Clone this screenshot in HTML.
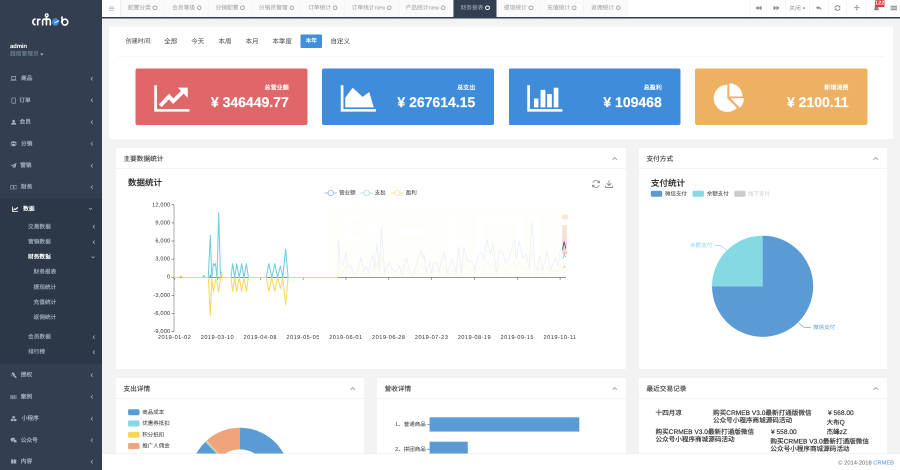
<!DOCTYPE html>
<html lang="zh-CN">
<head>
<meta charset="utf-8">
<title>CRMEB</title>
<style>
html,body{margin:0;padding:0;width:900px;height:470px;overflow:hidden;background:#f3f3f4}
body{font-family:"Liberation Sans",sans-serif}
#app{text-rendering:geometricPrecision;position:absolute;left:0;top:0;width:1800px;height:940px;transform:scale(.5);transform-origin:0 0;will-change:transform;font-size:12px;color:#676a6c;overflow:hidden;line-height:1}
#app *{box-sizing:border-box}
.a{position:absolute;white-space:nowrap}
#side{left:0;top:0;width:204px;height:940px;background:#333e50}
#sub{left:0;top:397px;width:204px;height:330px;background:#2c3747}
.nv{left:42px;font-size:11.4px;font-weight:bold;color:#a7b1c2;height:14px;line-height:14px}
.nv2{left:56px;font-size:11.4px;color:#b2bbc9;-webkit-text-stroke:.2px #b2bbc9;height:14px;line-height:14px}
.nv3{left:67px;font-size:11.4px;color:#b2bbc9;-webkit-text-stroke:.2px #b2bbc9;height:14px;line-height:14px}
.ch{font-size:13px;color:#a7b1c2;height:14px;line-height:14px;font-weight:bold}
.ic{left:20.5px;width:12.600px;height:12.600px}
#top{left:204px;top:0;width:1596px;height:34.5px;background:#fff}
#topb{left:204px;top:34.2px;width:1596px;height:2.900px;background:#333e50}
.tab{top:0;height:34px;line-height:33.5px;font-size:11.5px;color:#9c9c9c;background:#fafafa;border-right:1px solid #eee;padding-left:14.3px}
.tab i{display:inline-block;width:9.5px;height:9.5px;border:2.3px solid #adadad;border-radius:50%;margin-left:3.5px;vertical-align:-1px}
.tab.on{background:#333e50;color:#a7b1c2;border-right:none}
.tab.on i{border:2.5px solid #fff;background:#333e50}
.rb{top:0;height:34px;background:#fff;border-left:1px solid #eee;line-height:34px;text-align:center;color:#999;font-size:11.5px}
.box{background:#fff}
.hd{height:45px;border-bottom:1px solid #e7eaec;border-top:2px solid #e7eaec}
.hd span{position:absolute;left:15px;top:17.3px;font-size:13.3px;color:#444;line-height:14px;-webkit-text-stroke:.3px #444}
.card{top:137px;width:344.5px;height:113px;border-radius:4px}
.card .l{position:absolute;right:37.5px;top:31px;font-size:12.1px;font-weight:bold;color:#fff;line-height:14px}
.card .n{position:absolute;right:37.5px;top:52.5px;font-size:28px;font-weight:bold;color:#fff;line-height:30px;-webkit-text-stroke:.4px #fff}
.flt{top:75px;font-size:13px;color:#444;height:16px;line-height:16px}
.ax{font-size:11.3px;color:#333;height:12px;line-height:12px;letter-spacing:.9px}
.lg{font-size:11px;color:#333;height:12px;line-height:12px}
.tx{font-size:13.2px;color:#333;line-height:15px;-webkit-text-stroke:.35px #333}
</style>
</head>
<body>
<div id="app">
<div id="side" class="a">
<div id="sub" class="a"></div>
<svg class="a" style="left:60px;top:20px" width="84" height="40" viewBox="30 10 42 20">
<g fill="none" stroke="#fff" stroke-width="1.65" stroke-linecap="round" stroke-linejoin="round">
<path d="M35,19.100A2.900,2.900 0 0 0 35,24.700"/>
<path d="M37.700,24.800V19.300M37.700,21.700A2.400,2.400 0 0 1 40,19.300"/>
<path d="M42.600,24.800V20.900A1.930,1.930 0 0 1 46.450,20.900V24.800M46.450,20.900A1.930,1.930 0 0 1 50.300,20.900V24.800M46.450,20.900V17.200"/>
<path d="M62,17.100V22.100"/><circle cx="64.900" cy="22.100" r="2.900"/>
</g>
<circle cx="46.700" cy="15.200" r="1.350" fill="#333e50" stroke="#fff" stroke-width="1.300"/>
<ellipse cx="55.450" cy="21.900" rx="3.400" ry="3.800" fill="#3b8de0"/>
<path d="M54.500,22.800L59.200,20.700" stroke="#fff" stroke-width="1"/>
</svg>
<div class="a" style="left:20px;top:85px;font-size:12px;letter-spacing:-.3px;font-weight:bold;color:#fff;line-height:14px">admin</div>
<div class="a" style="left:20px;top:101px;font-size:11.5px;color:#8095a8;line-height:14px">超级管理员 <svg width="7.500" height="4.200" viewBox="0 0 8 4.500" style="vertical-align:-.3px;margin-left:-.5px"><path d="M0,0h8l-4,4.500z" fill="#a3aebf"/></svg></div>
<svg class="a ic" style="top:151.1px" viewBox="0 0 14 14"><path d="M2.5,2.5h9v6.5h-9z" fill="none" stroke="#a7b1c2" stroke-width="1.4"/><path d="M0,10.5h14v1.2h-14z" fill="#a7b1c2"/></svg>
<div class="a nv" style="top:150.4px;left:42.0px;color:#a7b1c2">商品</div>
<svg class="a" style="left:181px;top:152.9px" width="6" height="9" viewBox="0 0 6 9"><path d="M4.500,1l-3.500,3.500 3.500,3.500" fill="none" stroke="#a7b1c2" stroke-width="1.500"/></svg>
<svg class="a ic" style="top:194.5px" viewBox="0 0 14 14"><rect x="3" y="1" width="8.5" height="12" rx="1.5" fill="none" stroke="#a7b1c2" stroke-width="1.4"/><circle cx="7.2" cy="10.8" r=".8" fill="#a7b1c2"/></svg>
<div class="a nv" style="top:193.8px;left:38.5px;color:#a7b1c2">订单</div>
<svg class="a" style="left:181px;top:196.3px" width="6" height="9" viewBox="0 0 6 9"><path d="M4.500,1l-3.500,3.500 3.500,3.500" fill="none" stroke="#a7b1c2" stroke-width="1.500"/></svg>
<svg class="a ic" style="top:237.9px" viewBox="0 0 14 14"><circle cx="7" cy="4.5" r="2.8" fill="#a7b1c2"/><path d="M1.5,12.5c0-4,2.5-5,5.5-5s5.5,1,5.500,5z" fill="#a7b1c2"/></svg>
<div class="a nv" style="top:237.2px;left:39.0px;color:#a7b1c2">会员</div>
<svg class="a" style="left:181px;top:239.7px" width="6" height="9" viewBox="0 0 6 9"><path d="M4.500,1l-3.500,3.500 3.500,3.500" fill="none" stroke="#a7b1c2" stroke-width="1.500"/></svg>
<svg class="a ic" style="top:281.3px" viewBox="0 0 14 14"><circle cx="7" cy="3.6" r="2.4" fill="#a7b1c2"/><circle cx="2.6" cy="4.4" r="1.8" fill="#a7b1c2"/><circle cx="11.4" cy="4.4" r="1.8" fill="#a7b1c2"/><path d="M2.5,12.5c0-4,2-5.2,4.500-5.200s4.500,1.200,4.500,5.200z M0,9.500c0-2.500,1-3.200,2.800-3.200l-.8,3.200z M14,9.500c0-2.500-1-3.200-2.800-3.200l.8,3.200z" fill="#a7b1c2"/></svg>
<div class="a nv" style="top:280.6px;left:42.0px;color:#a7b1c2">分销</div>
<svg class="a" style="left:181px;top:283.1px" width="6" height="9" viewBox="0 0 6 9"><path d="M4.500,1l-3.500,3.500 3.500,3.500" fill="none" stroke="#a7b1c2" stroke-width="1.500"/></svg>
<svg class="a ic" style="top:324.7px" viewBox="0 0 14 14"><path d="M13.500,.8L.8,7.200l3.600,1.500 7-5.500-5.500,6.500v3.300l2.200-2.400 2.800,1.200z" fill="#a7b1c2"/></svg>
<div class="a nv" style="top:324.0px;left:40.2px;color:#a7b1c2">营销</div>
<svg class="a" style="left:181px;top:326.5px" width="6" height="9" viewBox="0 0 6 9"><path d="M4.500,1l-3.500,3.500 3.500,3.500" fill="none" stroke="#a7b1c2" stroke-width="1.500"/></svg>
<svg class="a ic" style="top:368.1px" viewBox="0 0 14 14"><rect x=".7" y="3" width="12.600" height="8" fill="none" stroke="#a7b1c2" stroke-width="1.3"/><ellipse cx="7" cy="7" rx="1.600" ry="2.300" fill="#a7b1c2"/></svg>
<div class="a nv" style="top:367.4px;left:42.0px;color:#a7b1c2">财务</div>
<svg class="a" style="left:181px;top:369.9px" width="6" height="9" viewBox="0 0 6 9"><path d="M4.500,1l-3.500,3.500 3.500,3.500" fill="none" stroke="#a7b1c2" stroke-width="1.500"/></svg>
<svg class="a ic" style="top:411.5px;left:24.2px" viewBox="0 0 14 14"><path d="M1,1.500v10.500h12.500" fill="none" stroke="#fff" stroke-width="1.800"/><path d="M3,9.500l3-3.500 2.200,2 4-4.500" fill="none" stroke="#fff" stroke-width="2.100"/><path d="M9.800,2.800h3.400v3.400z" fill="#fff"/></svg>
<div class="a nv" style="top:410.8px;left:46.3px;color:#fff">数据</div>
<svg class="a" style="left:177px;top:415.3px" width="8" height="5.300" viewBox="0 0 9 6"><path d="M1,1l3.500,3.500 3.500-3.500" fill="none" stroke="#a7b1c2" stroke-width="1.600"/></svg>
<svg class="a ic" style="top:744.1px" viewBox="0 0 14 14"><path d="M5.200,1l4.500,4.500-2.200,2.200-4.500-4.500z M7.500,6l5.800,5.800-1.500,1.500-5.800-5.800z M1,6.500l3.500,3.500" fill="#a7b1c2" stroke="#a7b1c2" stroke-width="1.200"/></svg>
<div class="a nv" style="top:743.4px;left:41.5px;color:#a7b1c2">授权</div>
<svg class="a" style="left:181px;top:745.9px" width="6" height="9" viewBox="0 0 6 9"><path d="M4.500,1l-3.500,3.500 3.500,3.500" fill="none" stroke="#a7b1c2" stroke-width="1.500"/></svg>
<svg class="a ic" style="top:787.5px" viewBox="0 0 14 14"><path d="M0,2.500h1.500v9h-1.500z M2.500,2.500h.8v9h-.8z M4.200,2.500h1.600v9h-1.600z M6.800,2.500h.8v9h-.8z M8.500,2.500h1.600v9h-1.600z M11,2.500h.8v9h-.8z M12.600,2.500h1.400v9h-1.400z" fill="#a7b1c2"/></svg>
<div class="a nv" style="top:786.8px;left:41.5px;color:#a7b1c2">案例</div>
<svg class="a" style="left:181px;top:789.3px" width="6" height="9" viewBox="0 0 6 9"><path d="M4.500,1l-3.500,3.500 3.500,3.500" fill="none" stroke="#a7b1c2" stroke-width="1.500"/></svg>
<svg class="a ic" style="top:830.9px" viewBox="0 0 14 14"><path d="M7,1l3,1.300v3.200l-3,1.300-3-1.300v-3.200z M3.600,7l3,1.300v3.400l-3,1.300-3-1.300v-3.400z M10.400,7l3,1.300v3.400l-3,1.300-3-1.300v-3.400z" fill="#a7b1c2"/></svg>
<div class="a nv" style="top:830.2px;left:43.4px;color:#a7b1c2">小程序</div>
<svg class="a" style="left:181px;top:832.7px" width="6" height="9" viewBox="0 0 6 9"><path d="M4.500,1l-3.500,3.500 3.500,3.500" fill="none" stroke="#a7b1c2" stroke-width="1.500"/></svg>
<svg class="a ic" style="top:874.3px" viewBox="0 0 14 14"><ellipse cx="5.300" cy="5.500" rx="5.200" ry="4.200" fill="#a7b1c2"/><ellipse cx="10" cy="9" rx="4.200" ry="3.400" fill="#a7b1c2" stroke="#2f4050" stroke-width=".8"/><path d="M2,8.500l-.8,2.500 2.800-1.400z M12.500,11.500l.8,2-2.500-1.200z" fill="#a7b1c2"/></svg>
<div class="a nv" style="top:873.6px;left:41.5px;color:#a7b1c2">公众号</div>
<svg class="a" style="left:181px;top:876.1px" width="6" height="9" viewBox="0 0 6 9"><path d="M4.500,1l-3.500,3.500 3.500,3.500" fill="none" stroke="#a7b1c2" stroke-width="1.500"/></svg>
<svg class="a ic" style="top:917.1px" viewBox="0 0 14 14"><path d="M1,2.500c2-1,4-1,6,0v9.500c-2-1-4-1-6,0z M13,2.500c-2-1-4-1-6,0v9.500c2-1,4-1,6,0z" fill="#a7b1c2" stroke="#2f4050" stroke-width=".5"/></svg>
<div class="a nv" style="top:916.4px;left:41.5px;color:#a7b1c2">内容</div>
<svg class="a" style="left:181px;top:918.9px" width="6" height="9" viewBox="0 0 6 9"><path d="M4.500,1l-3.500,3.500 3.500,3.500" fill="none" stroke="#a7b1c2" stroke-width="1.500"/></svg>
<div class="a nv2" style="top:446.6px;">交易数据</div>
<svg class="a" style="left:185px;top:449.1px" width="6" height="9" viewBox="0 0 6 9"><path d="M4.500,1l-3.500,3.500 3.500,3.500" fill="none" stroke="#a7b1c2" stroke-width="1.500"/></svg>
<div class="a nv2" style="top:477.2px;">营销数据</div>
<svg class="a" style="left:185px;top:479.7px" width="6" height="9" viewBox="0 0 6 9"><path d="M4.500,1l-3.500,3.500 3.500,3.500" fill="none" stroke="#a7b1c2" stroke-width="1.500"/></svg>
<div class="a nv2" style="top:507.2px;color:#fff;font-weight:bold;-webkit-text-stroke:0">财务数据</div>
<svg class="a" style="left:182px;top:511.7px" width="8" height="5.300" viewBox="0 0 9 6"><path d="M1,1l3.500,3.500 3.500-3.500" fill="none" stroke="#a7b1c2" stroke-width="1.600"/></svg>
<div class="a nv2" style="top:667.0px;">会员数据</div>
<svg class="a" style="left:185px;top:669.5px" width="6" height="9" viewBox="0 0 6 9"><path d="M4.500,1l-3.500,3.500 3.500,3.500" fill="none" stroke="#a7b1c2" stroke-width="1.500"/></svg>
<div class="a nv2" style="top:697.4px;">排行榜</div>
<svg class="a" style="left:185px;top:699.9px" width="6" height="9" viewBox="0 0 6 9"><path d="M4.500,1l-3.500,3.500 3.500,3.500" fill="none" stroke="#a7b1c2" stroke-width="1.500"/></svg>
<div class="a nv3" style="top:537.0px">财务报表</div>
<div class="a nv3" style="top:567.8px">提现统计</div>
<div class="a nv3" style="top:597.6px">充值统计</div>
<div class="a nv3" style="top:627.6px">返佣统计</div>
</div>
<div id="top" class="a"></div><div id="topb" class="a"></div>
<svg class="a" style="left:217.5px;top:12.800px" width="10.500" height="8.500" viewBox="0 0 10.500 8.500"><path d="M0,1h10.500M0,4.250h10.500M0,7.500h10.500" stroke="#9a9a9a" stroke-width="1.250"/></svg>
<div class="a tab" style="left:241.4px;width:88.6px">配置分类<i></i></div>
<div class="a tab" style="left:330.0px;width:86.6px">会员等级<i></i></div>
<div class="a tab" style="left:416.6px;width:86.8px">分销配置<i></i></div>
<div class="a tab" style="left:503.4px;width:98.6px">分销员管理<i></i></div>
<div class="a tab" style="left:602.0px;width:87.0px">订单统计<i></i></div>
<div class="a tab" style="left:689.0px;width:107.8px">订单统计new<i></i></div>
<div class="a tab" style="left:796.8px;width:109.8px">产品统计new<i></i></div>
<div class="a tab on" style="left:906.6px;width:86.8px">财务报表<i></i></div>
<div class="a tab" style="left:993.4px;width:86.6px">提现统计<i></i></div>
<div class="a tab" style="left:1080.0px;width:88.0px">充值统计<i></i></div>
<div class="a tab" style="left:1168.0px;width:87.4px">返佣统计<i></i></div>
<div class="a" style="left:240px;top:0;width:1.5px;height:34px;background:#eee"></div>
<div class="a rb" style="left:1497.8px;width:35.6px"><svg width="13" height="12" viewBox="0 0 13 12" style="vertical-align:-2px"><path d="M7,1.500v9l-6-4.500z M13,1.500v9l-6-4.500z" fill="#888"/></svg></div>
<div class="a rb" style="left:1533.4px;width:37.8px"><svg width="13" height="12" viewBox="0 0 13 12" style="vertical-align:-2px"><path d="M1,1.500v9l6-4.500z M7,1.500v9l6-4.500z" fill="#888"/></svg></div>
<div class="a rb" style="left:1571.2px;width:46.6px">关闭 <span style="font-size:7px;vertical-align:1.5px;color:#666">&#9660;</span></div>
<div class="a rb" style="left:1617.8px;width:37.8px"><svg width="13" height="12" viewBox="0 0 13 12" style="vertical-align:-2px"><path d="M5.500,1.500l-4.500,4 4.500,4v-2.500c3.500,0,5.500,1,6.500,3.500 0-4.500-2.500-6.500-6.500-6.500z" fill="#888"/></svg></div>
<div class="a rb" style="left:1655.6px;width:37.8px"><svg width="13" height="12" viewBox="0 0 13 12" style="vertical-align:-2px"><path d="M11.300,4.200a5,5 0 0 0-9.300,1 M2.700,7.800a5,5 0 0 0 9.300-1" fill="none" stroke="#888" stroke-width="1.800"/><path d="M12.500,1v4h-4z M1.500,11v-4h4z" fill="#888"/></svg></div>
<div class="a rb" style="left:1693.4px;width:39.0px"><svg width="13" height="12" viewBox="0 0 13 12" style="vertical-align:-2px"><path d="M7,0l2.200,2.600h-1.500v2.700h2.700v-1.500l2.600,2.200-2.600,2.200v-1.500h-2.700v2.700h1.500l-2.200,2.600-2.200-2.600h1.500v-2.700h-2.700v1.500l-2.600-2.200 2.600-2.200v1.500h2.700v-2.700h-1.500z" fill="#888" transform="translate(0,-.5) scale(.95)"/></svg></div>
<div class="a rb" style="left:1732.4px;width:38.8px"><svg width="13" height="12" viewBox="0 0 13 12" style="vertical-align:-2px"><path d="M7,1c-2.500,0-3.800,2-3.800,4.500 0,2.500-1,3.500-2,4.500h11.600c-1-1-2-2-2-4.500 0-2.500-1.300-4.500-3.800-4.500z M5.500,10.800a1.500,1.500 0 0 0 3,0z" fill="#888"/></svg></div>
<div class="a rb" style="left:1771.2px;width:30.8px"><svg width="13" height="12" viewBox="0 0 13 12" style="vertical-align:-2px"><path d="M0,1.500h13v9h-13z" fill="#999"/><path d="M0,4.500h13M0,7.500h13" stroke="#fff" stroke-width=".8"/></svg></div>
<div class="a" style="left:1749.5px;top:0;width:19.5px;height:13.5px;background:#e0363f;border-radius:2px;color:#fff;font-size:11px;font-weight:bold;line-height:13px;text-align:center">122</div>
<div class="a box" style="left:218px;top:53px;width:1568px;height:224.5px"></div>
<div class="a" style="left:236px;top:112px;width:1532px;height:1px;background:#eee"></div>
<div class="a flt" style="left:251px;top:73.5px;font-size:12.3px;color:#444">创建时间:</div>
<div class="a flt" style="left:328.4px">全部</div>
<div class="a flt" style="left:382.6px">今天</div>
<div class="a flt" style="left:437.0px">本周</div>
<div class="a flt" style="left:491.2px">本月</div>
<div class="a flt" style="left:544.8px">本季度</div>
<div class="a flt" style="left:661.0px">自定义</div>
<div class="a" style="left:601px;top:69px;width:43px;height:27px;background:#3f8fdb;border-radius:2px;color:#fff;font-size:11.5px;font-weight:bold;line-height:27px;text-align:center">本年</div>
<div class="a card" style="left:270.5px;background:#df6669"><svg style="position:absolute;left:37px;top:32px;overflow:visible" width="72" height="58" viewBox="0 0 72 58"><path d="M.5,1.400h5.400v47.800h65v5h-70.400z" fill="#fff"/><path d="M12.500,42.500l17.700,-18.500 8.200,9.500 19,-18.500" fill="none" stroke="#fff" stroke-width="7.600"/><path d="M47.500,6.200h20v20.500z" fill="#fff"/></svg><div class="l">总营业额</div><div class="n">¥ 346449.77</div></div>
<div class="a card" style="left:643.5px;background:#3f8cdb"><svg style="position:absolute;left:37px;top:32px;overflow:visible" width="72" height="58" viewBox="0 0 72 58"><path d="M.5,1.400h5.400v47.800h65v5h-70.400z" fill="#fff"/><path d="M9.500,45.800v-19.600l14.800,-19.600 20,18.200 13.200,-9.800 9,30.800z" fill="#fff"/></svg><div class="l">总支出</div><div class="n">¥ 267614.15</div></div>
<div class="a card" style="left:1016.5px;background:#3f8cdb"><svg style="position:absolute;left:37px;top:32px;overflow:visible" width="72" height="58" viewBox="0 0 72 58"><path d="M.5,1.400h5.400v47.800h65v5h-70.400z" fill="#fff"/><path d="M14,45.700v-17.800h8.800v17.800z M27.100,45.700v-34.900h9.700v34.900z M40.200,45.700v-26.700h9.500v26.700z M53.500,45.700v-39.100h9.300v39.100z" fill="#fff"/></svg><div class="l">总盈利</div><div class="n">¥ 109468</div></div>
<div class="a card" style="left:1390.0px;background:#eeb164"><svg style="position:absolute;left:37px;top:32px;overflow:visible" width="72" height="58" viewBox="0 0 72 58"><g transform="translate(-37,-32)"><path d="M64.600,32.400a27.200,27.200 0 1 0 19.230,46.430l-19.230,-19.230z" fill="#fff"/><path d="M68.500,29.500a26.400,26.400 0 0 1 26.400,26.400h-26.400z" fill="#fff"/><path d="M71,59.600h26.800a26.800,26.800 0 0 1 -7.850,18.950z" fill="#fff"/></g></svg><div class="l">新增消费</div><div class="n">¥ 2100.11</div></div>
<div class="a box" style="left:232px;top:293.4px;width:1020px;height:445px"><div class="hd"><span>主要数据统计</span></div></div>
<svg class="a" style="left:1224.4px;top:312.6px" width="11" height="8" viewBox="0 0 11 8"><path d="M1,6.500l4.500-4.500 4.500,4.500" fill="none" stroke="#a2a2a2" stroke-width="1.900"/></svg>
<div class="a" style="left:256px;top:357px;font-size:17px;font-weight:bold;color:#333;line-height:18px">数据统计</div>
<svg class="a" style="left:648.5px;top:379.2px" width="25" height="14" viewBox="0 0 25 14"><path d="M0,7h25" stroke="#5b9bd5" stroke-width="1.200"/><circle cx="12.500" cy="7" r="5.500" fill="#fff" stroke="#5b9bd5" stroke-width="1.100"/></svg>
<div class="a lg" style="left:678.2px;top:380.2px">营业额</div>
<svg class="a" style="left:721.0px;top:379.2px" width="25" height="14" viewBox="0 0 25 14"><path d="M0,7h25" stroke="#7fd6e0" stroke-width="1.200"/><circle cx="12.500" cy="7" r="5.500" fill="#fff" stroke="#7fd6e0" stroke-width="1.100"/></svg>
<div class="a lg" style="left:749.4px;top:380.2px">支出</div>
<svg class="a" style="left:781.5px;top:379.2px" width="25" height="14" viewBox="0 0 25 14"><path d="M0,7h25" stroke="#f6d858" stroke-width="1.200"/><circle cx="12.500" cy="7" r="5.500" fill="#fff" stroke="#f6d858" stroke-width="1.100"/></svg>
<div class="a lg" style="left:811.6px;top:380.2px">盈利</div>
<svg class="a" style="left:0;top:0" width="1800" height="940" viewBox="0 0 900 470"><rect x="331" y="209" width="230" height="68" fill="#fefefb"/><defs><linearGradient id="gi" x1="0" y1="0" x2="0" y2="1"><stop offset="0" stop-color="#fbe6d8"/><stop offset="1" stop-color="#f8d4cf"/></linearGradient></defs><rect x="561.800" y="214.300" width="6.400" height="5.300" rx="2.200" fill="#fce9d3"/><rect x="562.100" y="225" width="4.900" height="29.400" fill="url(#gi)"/><path d="M564.500,251.800l2,1.800 -2,1.800 -2,-1.800z" fill="#f4bdb5"/><circle cx="358" cy="228" r="13" fill="none" stroke="#fff" stroke-width="9"/><path d="M400,232h30M452,215v50M480,220h40v40h-40zM536,215v55" stroke="#fff" stroke-width="8" fill="none"/><polyline points="337.7,276.9 338.6,239.8 340.4,261.5 343.1,265.1 345.8,252.5 347.6,266.9 350.3,265.1 353.9,274.2 356.7,272.4 358.5,267.8 361.2,257.0 363.9,271.5 365.7,266.0 368.4,272.4 372.9,255.2 374.7,268.7 377.1,243.4 379.3,270.5 381.4,227.1 384.7,272.4 389.2,261.5 392.8,270.5 395.5,272.4 398.8,265.1 401.9,274.2 406.4,257.9 410.0,272.4 413.6,275.1 417.3,261.5 420.9,250.7 422.7,257.9 424.1,255.2 426.3,272.4 429.6,262.4 431.7,273.3 433.5,263.3 436.3,262.4 439.0,272.4 441.7,259.7 444.4,252.5 447.1,272.4 450.0,265.1 452.2,259.7 455.8,272.3 458.6,247.0 461.3,272.3 464.0,247.0 466.7,259.7 472.1,262.4 474.8,270.5 478.5,254.2 481.2,252.4 483.9,259.7 487.0,239.8 490.2,254.2 492.9,243.4 496.5,272.3 499.2,250.6 502.9,252.4 505.6,263.3 509.2,257.9 514.6,239.8 516.4,259.7 519.1,240.7 522.8,257.9 526.4,254.2 529.1,268.7 532.3,220.8 534.5,265.1 537.2,270.5 539.4,256.1 542.6,270.5 547.2,252.4 550.8,270.5 555.3,257.9 558.0,265.1 560.7,248.8" fill="none" stroke="#e7effa" stroke-width=".7"/><polyline points="337.7,277.2 338.6,260.5 340.4,270.3 343.1,271.9 345.8,266.2 347.6,272.7 350.3,271.9 353.9,276.0 356.7,275.2 358.5,273.2 361.2,268.3 363.9,274.8 365.7,272.3 368.4,275.2 372.9,267.5 374.7,273.6 377.1,262.2 379.3,274.4 381.4,254.8 384.7,275.2 389.2,270.3 392.8,274.4 395.5,275.2 398.8,271.9 401.9,276.0 406.4,268.7 410.0,275.2 413.6,276.4 417.3,270.3 420.9,265.4 422.7,268.7 424.1,267.5 426.3,275.2 429.6,270.7 431.7,275.6 433.5,271.1 436.3,270.7 439.0,275.2 441.7,269.5 444.4,266.2 447.1,275.2 450.0,271.9 452.2,269.5 455.8,275.2 458.6,263.8 461.3,275.2 464.0,263.8 466.7,269.5 472.1,270.7 474.8,274.4 478.5,267.0 481.2,266.2 483.9,269.5 487.0,260.5 490.2,267.0 492.9,262.2 496.5,275.2 499.2,265.4 502.9,266.2 505.6,271.1 509.2,268.7 514.6,260.5 516.4,269.5 519.1,260.9 522.8,268.7 526.4,267.0 529.1,273.5 532.3,252.0 534.5,271.9 537.2,274.4 539.4,267.9 542.6,274.4 547.2,266.2 550.8,274.4 555.3,268.7 558.0,271.9 560.7,264.6" fill="none" stroke="#fdf8e3" stroke-width=".6"/><path d="M174,204.800V331.800" stroke="#555" stroke-width=".5"/><path d="M171.500,204.8H174" stroke="#333" stroke-width=".5"/><path d="M171.500,222.9H174" stroke="#333" stroke-width=".5"/><path d="M171.500,241.0H174" stroke="#333" stroke-width=".5"/><path d="M171.500,259.1H174" stroke="#333" stroke-width=".5"/><path d="M171.500,277.2H174" stroke="#333" stroke-width=".5"/><path d="M171.500,295.3H174" stroke="#333" stroke-width=".5"/><path d="M171.500,313.4H174" stroke="#333" stroke-width=".5"/><path d="M171.500,331.5H174" stroke="#333" stroke-width=".5"/><path d="M174,277.500H566" stroke="#333" stroke-width=".6"/><path d="M174.6,277.500v2.300" stroke="#333" stroke-width=".5"/><path d="M217.4,277.500v2.300" stroke="#333" stroke-width=".5"/><path d="M260.3,277.500v2.300" stroke="#333" stroke-width=".5"/><path d="M303.1,277.500v2.300" stroke="#333" stroke-width=".5"/><path d="M345.9,277.500v2.300" stroke="#333" stroke-width=".5"/><path d="M388.8,277.500v2.300" stroke="#333" stroke-width=".5"/><path d="M431.6,277.500v2.300" stroke="#333" stroke-width=".5"/><path d="M474.4,277.500v2.300" stroke="#333" stroke-width=".5"/><path d="M517.2,277.500v2.300" stroke="#333" stroke-width=".5"/><path d="M560.1,277.500v2.300" stroke="#333" stroke-width=".5"/><polyline points="174.0,277.5 202.5,277.5 203.8,275.7 205.0,277.5 209.5,277.5 210.4,275.1 211.3,277.5 337.0,277.5" fill="none" stroke="#5b9bd5" stroke-width=".8"/><polyline points="174.0,277.5 179.5,277.5 181.0,276.0 182.5,277.5 202.5,277.5 203.8,275.4 205.0,277.5 208.3,277.5 210.3,235.3 211.8,277.5 213.4,263.6 214.4,265.4 215.4,263.6 217.0,277.5 218.7,212.9 220.5,277.5 221.4,272.1 222.3,277.5 231.0,277.5 232.6,263.6 234.7,277.5 236.7,263.6 239.2,277.5 241.7,263.6 244.0,277.5 246.4,263.6 248.4,277.5 266.3,277.5 268.8,263.6 271.8,277.5 274.8,263.6 277.6,277.5 280.4,266.0 282.8,277.5 285.6,249.1 288.1,277.5 337.0,277.5" fill="none" stroke="#6fcfdd" stroke-width="1.050" stroke-linejoin="round"/><polyline points="174.0,277.5 179.5,277.5 181.0,276.0 182.5,277.5 208.3,277.5 210.3,315.5 211.8,278.4 213.5,292.0 215.6,279.3 217.0,282.9 218.7,292.0 220.5,277.5 221.4,272.7 222.3,277.5 231.0,277.5 232.6,291.4 234.7,277.5 236.7,291.4 239.2,277.5 241.7,291.4 244.0,277.5 246.4,291.4 248.4,277.5 266.3,277.5 268.8,291.4 271.8,277.5 274.8,291.4 277.6,277.5 280.4,288.4 282.8,277.5 285.6,304.6 288.1,277.5 337.5,277.5" fill="none" stroke="#f7d95c" stroke-width="1.050" stroke-linejoin="round"/><path d="M562.500,250l1.600,-8.500 1.700,7" fill="none" stroke="#3a6fc0" stroke-width="1"/><path d="M562.800,258.500l1.500,-3.500 1.500,2" fill="none" stroke="#6fcfdd" stroke-width=".9"/><path d="M563,268.500l1.300,-2.500 1.500,2" fill="none" stroke="#f7d95c" stroke-width=".9"/></svg>
<div class="a ax" style="right:1459.4px;top:403.6px;letter-spacing:.3px">12,000</div>
<div class="a ax" style="right:1459.4px;top:439.8px;letter-spacing:.3px">9,000</div>
<div class="a ax" style="right:1459.4px;top:476.0px;letter-spacing:.3px">6,000</div>
<div class="a ax" style="right:1459.4px;top:512.2px;letter-spacing:.3px">3,000</div>
<div class="a ax" style="right:1459.4px;top:548.4px;letter-spacing:.3px">0</div>
<div class="a ax" style="right:1459.4px;top:584.6px;letter-spacing:.3px">-3,000</div>
<div class="a ax" style="right:1459.4px;top:620.8px;letter-spacing:.3px">-6,000</div>
<div class="a ax" style="right:1459.4px;top:657.0px;letter-spacing:.3px">-9,000</div>
<div class="a ax" style="left:309.2px;top:669.2px;width:80px;text-align:center">2019-01-02</div>
<div class="a ax" style="left:394.9px;top:669.2px;width:80px;text-align:center">2019-03-10</div>
<div class="a ax" style="left:480.5px;top:669.2px;width:80px;text-align:center">2019-04-08</div>
<div class="a ax" style="left:566.2px;top:669.2px;width:80px;text-align:center">2019-05-05</div>
<div class="a ax" style="left:651.8px;top:669.2px;width:80px;text-align:center">2019-06-01</div>
<div class="a ax" style="left:737.5px;top:669.2px;width:80px;text-align:center">2019-06-28</div>
<div class="a ax" style="left:823.2px;top:669.2px;width:80px;text-align:center">2019-07-23</div>
<div class="a ax" style="left:908.8px;top:669.2px;width:80px;text-align:center">2019-08-19</div>
<div class="a ax" style="left:994.5px;top:669.2px;width:80px;text-align:center">2019-09-15</div>
<div class="a ax" style="left:1080.1px;top:669.2px;width:80px;text-align:center">2019-10-11</div>
<svg class="a" style="left:1183px;top:358.5px" width="18" height="18" viewBox="0 0 18 18"><path d="M15.500,6.500a7,7 0 0 0-13,0 M2.500,11.500a7,7 0 0 0 13,0" fill="none" stroke="#666" stroke-width="1.300"/><path d="M15.800,2.500v4.200h-4.200 M2.200,15.500v-4.200h4.200" fill="none" stroke="#666" stroke-width="1.300"/></svg>
<svg class="a" style="left:1209px;top:358.5px" width="18" height="18" viewBox="0 0 18 18"><path d="M9,1.500v10 M4.500,7.500l4.500,4.500 4.500-4.500 M2,12.500v3.500h14v-3.500" fill="none" stroke="#666" stroke-width="1.300"/></svg>
<div class="a box" style="left:1278px;top:293.4px;width:496px;height:445px"><div class="hd"><span>支付方式</span></div></div>
<svg class="a" style="left:1746.4px;top:312.6px" width="11" height="8" viewBox="0 0 11 8"><path d="M1,6.500l4.500-4.500 4.500,4.500" fill="none" stroke="#a2a2a2" stroke-width="1.900"/></svg>
<div class="a" style="left:1302px;top:357.5px;font-size:17px;font-weight:bold;color:#333;line-height:18px">支付统计</div>
<svg class="a" style="left:0;top:0" width="1800" height="940" viewBox="0 0 900 470"><path d="M762.60,286.30 L762.60,235.70 A50.60,50.60 0 1 1 712.00,286.30 Z" fill="#5b9bd5"/><path d="M762.60,286.30 L712.00,286.30 A50.60,50.60 0 0 1 762.60,235.70 Z" fill="#84d9e2"/><path d="M727.100,250.300L720.400,245.600H714.700" stroke="#84d9e2" stroke-width=".6" fill="none"/><path d="M798.400,322.700L804.200,327.600H810.900" stroke="#5b9bd5" stroke-width=".6" fill="none"/><rect x="650.800" y="190.700" width="11.400" height="6.100" rx="1.400" fill="#5b9bd5"/><rect x="692.500" y="190.700" width="11.400" height="6.100" rx="1.400" fill="#84d9e2"/><rect x="734.200" y="190.700" width="11.400" height="6.100" rx="1.400" fill="#ccc"/></svg><div class="a lg" style="left:1330px;top:381.6px">微信支付</div><div class="a lg" style="left:1413.4px;top:381.6px">余额支付</div><div class="a lg" style="left:1496px;top:381.6px;color:#ccc">线下支付</div><div class="a lg" style="left:1380.4px;top:485.2px;color:#84d9e2">余额支付</div><div class="a lg" style="left:1626.2px;top:649.4px;color:#5b9bd5">微信支付</div>
<div class="a box" style="left:232px;top:753.4px;width:496px;height:200px"><div class="hd"><span>支出详情</span></div></div>
<svg class="a" style="left:700.4px;top:772.6px" width="11" height="8" viewBox="0 0 11 8"><path d="M1,6.500l4.500-4.500 4.500,4.500" fill="none" stroke="#a2a2a2" stroke-width="1.900"/></svg>
<div class="a box" style="left:754px;top:753.4px;width:498px;height:200px"><div class="hd"><span>营收详情</span></div></div>
<svg class="a" style="left:1224.4px;top:772.6px" width="11" height="8" viewBox="0 0 11 8"><path d="M1,6.500l4.500-4.500 4.500,4.500" fill="none" stroke="#a2a2a2" stroke-width="1.900"/></svg>
<div class="a box" style="left:1278px;top:753.4px;width:496px;height:200px"><div class="hd"><span>最近交易记录</span></div></div>
<svg class="a" style="left:1746.4px;top:772.6px" width="11" height="8" viewBox="0 0 11 8"><path d="M1,6.500l4.500-4.500 4.500,4.500" fill="none" stroke="#a2a2a2" stroke-width="1.900"/></svg>
<svg class="a" style="left:0;top:0" width="1800" height="940" viewBox="0 0 900 470"><path d="M240.00,427.70 A49.70,49.70 0 1 1 205.16,441.95 L220.37,457.43 A28.00,28.00 0 1 0 240.00,449.40 Z" fill="#5b9bd5"/><path d="M205.16,441.95 A49.70,49.70 0 0 1 206.10,441.05 L220.90,456.92 A28.00,28.00 0 0 0 220.37,457.43 Z" fill="#84d9e2"/><path d="M206.10,441.05 A49.70,49.70 0 0 1 206.74,440.47 L221.26,456.59 A28.00,28.00 0 0 0 220.90,456.92 Z" fill="#f6d858"/><path d="M206.74,440.47 A49.70,49.70 0 0 1 240.00,427.70 L240.00,449.40 A28.00,28.00 0 0 0 221.26,456.59 Z" fill="#f0a47c"/><rect x="128.100" y="409.20" width="11.400" height="6.100" rx="1.400" fill="#5b9bd5"/><rect x="128.100" y="420.45" width="11.400" height="6.100" rx="1.400" fill="#84d9e2"/><rect x="128.100" y="431.70" width="11.400" height="6.100" rx="1.400" fill="#f6d858"/><rect x="128.100" y="442.95" width="11.400" height="6.100" rx="1.400" fill="#f0a47c"/><rect x="429.600" y="417.300" width="149.700" height="14.300" fill="#5b9bd5"/><rect x="429.600" y="441.700" width="38.200" height="14.300" fill="#5b9bd5"/><path d="M427.300,424.600h2.300M427.300,449.200h2.300" stroke="#333" stroke-width=".5" fill="none"/></svg><div class="a lg" style="left:284.600px;top:818.6px">商品成本</div><div class="a lg" style="left:284.600px;top:841.1px">优惠券抵扣</div><div class="a lg" style="left:284.600px;top:863.6px">积分抵扣</div><div class="a lg" style="left:284.600px;top:886.1px">推广人佣金</div><div class="a lg" style="right:948.6px;top:843.4px">1、普通商品</div><div class="a lg" style="right:948.6px;top:892.6px">2、拼团商品</div><div class="a tx" style="left:1311.0px;top:817.5px"><span style="display:block;height:15.0px;line-height:15px">十四月凉</span></div><div class="a tx" style="left:1426.0px;top:817.5px"><span style="display:block;height:15.0px;line-height:15px">购买CRMEB V3.0最新打通版微信</span><span style="display:block;height:15.0px;line-height:15px">公众号小程序商城源码活动</span></div><div class="a tx" style="left:1656.0px;top:817.5px"><span style="display:block;height:15.0px;line-height:15px">¥ 568.00</span></div><div class="a tx" style="left:1653.0px;top:837.3px"><span style="display:block;height:15.0px;line-height:15px">大布Q</span></div><div class="a tx" style="left:1311.0px;top:855.7px"><span style="display:block;height:15.0px;line-height:15px">购买CRMEB V3.0最新打通版微信</span><span style="display:block;height:15.0px;line-height:15px">公众号小程序商城源码活动</span></div><div class="a tx" style="left:1542.0px;top:855.7px"><span style="display:block;height:15.0px;line-height:15px">¥ 558.00</span></div><div class="a tx" style="left:1653.0px;top:855.7px"><span style="display:block;height:15.0px;line-height:15px">杰峰zZ</span></div><div class="a tx" style="left:1540.8px;top:874.5px"><span style="display:block;height:15.0px;line-height:15px">购买CRMEB V3.0最新打通版微信</span><span style="display:block;height:15.0px;line-height:15px">公众号小程序商城源码活动</span></div>
<div class="a" style="left:204px;top:907px;width:1596px;height:33px;background:#fff;border-top:1px solid #e7eaec"></div>
<div class="a" style="right:12px;top:920px;font-size:11.5px;color:#5c5f61;line-height:13px">© 2014-2018 <span style="color:#4a8fdc">CRMEB</span></div>
</div>
</body>
</html>
